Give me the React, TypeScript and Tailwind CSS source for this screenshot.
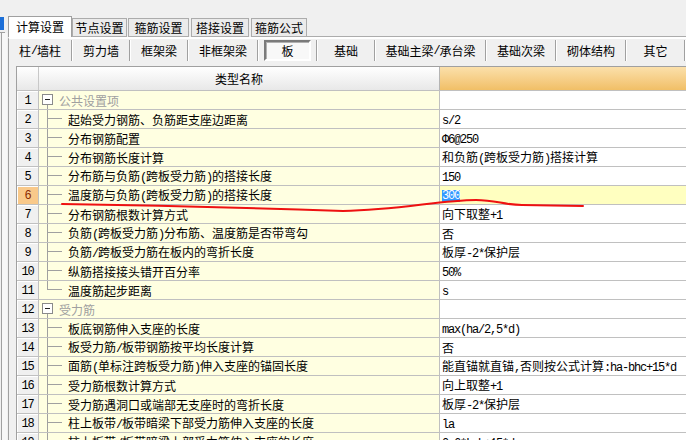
import React from 'react';

const latin = "font-['Liberation_Mono',monospace] text-[12px] tracking-[-1.2px]";

// latin runs get a half-width mono face, the rest stays CJK
const Txt = ({ s }: { s: string }) => (
  <>
    {s.split(/([\x20-\x7e\u03a6]+)/).filter(Boolean).map((p, i) =>
      /^[\x20-\x7e\u03a6]+$/.test(p)
        ? <span key={i} className={latin}>{p}</span>
        : <span key={i}>{p}</span>
    )}
  </>
);

type Row = { name: string; value: string; group?: boolean; last?: boolean };

const rows: Row[] = [
  { name: '公共设置项', value: '', group: true },
  { name: '起始受力钢筋、负筋距支座边距离', value: 's/2' },
  { name: '分布钢筋配置', value: '\u03a66@250' },
  { name: '分布钢筋长度计算', value: '和负筋(跨板受力筋)搭接计算' },
  { name: '分布筋与负筋(跨板受力筋)的搭接长度', value: '150' },
  { name: '温度筋与负筋(跨板受力筋)的搭接长度', value: '300' },
  { name: '分布钢筋根数计算方式', value: '向下取整+1' },
  { name: '负筋(跨板受力筋)分布筋、温度筋是否带弯勾', value: '否' },
  { name: '负筋/跨板受力筋在板内的弯折长度', value: '板厚-2*保护层' },
  { name: '纵筋搭接接头错开百分率', value: '50%' },
  { name: '温度筋起步距离', value: 's', last: true },
  { name: '受力筋', value: '', group: true },
  { name: '板底钢筋伸入支座的长度', value: 'max(ha/2,5*d)' },
  { name: '板受力筋/板带钢筋按平均长度计算', value: '否' },
  { name: '面筋(单标注跨板受力筋)伸入支座的锚固长度', value: '能直锚就直锚,否则按公式计算:ha-bhc+15*d' },
  { name: '受力筋根数计算方式', value: '向上取整+1' },
  { name: '受力筋遇洞口或端部无支座时的弯折长度', value: '板厚-2*保护层' },
  { name: '柱上板带/板带暗梁下部受力筋伸入支座的长度', value: 'la' },
  { name: '柱上板带/板带暗梁上部受力筋伸入支座的长度', value: '0.6*Lab+15*d' },
];

const tabs = [
  { label: '节点设置', w: 'w-[55px]', ml: '' },
  { label: '箍筋设置', w: 'w-[61px]', ml: 'ml-[1px]' },
  { label: '搭接设置', w: 'w-[58px]', ml: 'ml-[2px]' },
  { label: '箍筋公式', w: 'w-[56px]', ml: 'ml-[2px]' },
];

const subTabs = [
  { label: '柱/墙柱', w: 'w-[62px]' },
  { label: '剪力墙', w: 'w-[56px]' },
  { label: '框架梁', w: 'w-[56px]' },
  { label: '非框架梁', w: 'w-[68px]' },
  { label: '板', w: 'w-[57px]', active: true },
  { label: '基础', w: 'w-[56px]' },
  { label: '基础主梁/承台梁', w: 'w-[109px]' },
  { label: '基础次梁', w: 'w-[68px]' },
  { label: '砌体结构', w: 'w-[68px]' },
  { label: '其它', w: 'w-[57px]' },
];

const Tree = ({ group, last }: { group?: boolean; last?: boolean }) =>
  group ? (
    <svg width="20" height="18" className="shrink-0">
      <rect x="3.5" y="3.5" width="10" height="10" fill="#fff" stroke="#8a8a8a" />
      <line x1="6" y1="8.5" x2="11" y2="8.5" stroke="#222" />
      <line x1="8.5" y1="14" x2="8.5" y2="18" stroke="#a0a0a0" />
    </svg>
  ) : (
    <svg width="29" height="18" className="shrink-0">
      <line x1="8.5" y1="0" x2="8.5" y2={last ? 9 : 18} stroke="#a0a0a0" />
      <line x1="8" y1="8.5" x2="23" y2="8.5" stroke="#a0a0a0" />
    </svg>
  );

const App = () => {
  return (
    <div className="relative w-[686px] h-[440px] overflow-hidden bg-[#f0f0f0] flex font-['Noto_Sans_CJK_SC',sans-serif] text-[12px] text-black">
      {/* leftover of the side panel */}
      <div className="w-[8px] shrink-0 flex flex-col">
        <div className="h-[17px]" />
        <div className="h-[13px] w-[4px] bg-[#1c6fd8]" />
        <div className="h-[3px] w-[5px] border-b border-[#a0a0a0]" />
        <div className="flex-1 w-[6px] ml-[1px] border-l border-[#a0a0a0] bg-[#f7f7f7]" />
      </div>

      <div className="flex-1 min-w-0 flex flex-col">
        <div className="h-[16px] shrink-0" />
        {/* tab strip */}
        <div className="h-[21px] shrink-0 flex items-end">
          <div className="w-[64px] h-[21px] bg-white border border-b-0 border-[#a0a0a0] flex items-center justify-center">计算设置</div>
          {tabs.map((t) => (
            <div key={t.label} className={`${t.w} ${t.ml} h-[19px] bg-[#ebebeb] border border-[#acacac] flex items-center justify-center`}>
              {t.label}
            </div>
          ))}
          <div className="flex-1 h-[19px] border-b border-[#acacac]" />
        </div>

        <div className="flex-1 min-h-0 flex flex-col border-l border-[#a0a0a0] border-t-2 border-t-white pt-[1px]">
          {/* sub tabs */}
          <div className="h-[21px] shrink-0 flex">
            {subTabs.map((t) => (
              <React.Fragment key={t.label}>
                <div className={`${t.w} h-full flex items-center justify-center`}>
                  {t.active ? (
                    <div className="w-[47px] h-full border-2 border-t-[#7a7a7a] border-l-[#7a7a7a] border-b-white border-r-white bg-[#f8f8f8] shadow-[inset_1px_1px_0_#b0b0b0] flex items-center justify-center">
                      <Txt s={t.label} />
                    </div>
                  ) : (
                    <Txt s={t.label} />
                  )}
                </div>
                <div className="w-[2px] h-full border-l border-[#a0a0a0] border-r border-r-white" />
              </React.Fragment>
            ))}
          </div>

          {/* grid */}
          <div className="mt-[5px] ml-[7px] flex-1 min-h-0 flex flex-col border-l border-t border-[#a0a0a0] bg-white">
            <div className="h-[24px] shrink-0 flex border-b border-[#c0c0c0]">
              <div className="w-[22px] border-r border-[#c8c8c8] bg-linear-to-b from-white to-[#e8e8e8]" />
              <div className="w-[401px] border-r border-[#b4b4b4] bg-linear-to-b from-white to-[#e8e8e8] flex items-center justify-center pt-[1px]">类型名称</div>
              <div className="flex-1 bg-linear-to-b from-[#fbe0aa] to-[#f1bf66]" />
            </div>
            {rows.map((r, i) => {
              const cur = i === 5;
              return (
                <div key={i} className="h-[19px] shrink-0 flex leading-[18px] whitespace-nowrap">
                  <div className={`w-[22px] border-r border-b border-[#c0c0c0] shadow-[inset_1px_1px_0_#fff] flex items-center justify-center pt-[1px] ${cur ? 'bg-[#f9c98a] text-[#8a2a00]' : 'bg-[#f0f0f0]'}`}>
                    <span className={latin}>{i + 1}</span>
                  </div>
                  <div className="w-[401px] border-r border-b border-[#c0c0c0] bg-[#ffffe1] flex items-center overflow-hidden">
                    <Tree group={r.group} last={r.last} />
                    <span className={`pt-[2px] ${r.group ? 'text-[#a0a0a0]' : ''}`}>
                      <Txt s={r.name} />
                    </span>
                  </div>
                  <div className={`flex-1 border-b border-[#c0c0c0] pl-[2px] flex items-center overflow-hidden ${cur ? 'bg-[#ffffc0]' : ''}`}>
                    {cur ? (
                      <span className={`${latin} bg-[#3399ff] text-white leading-[12px] mt-[1px]`}>{r.value}</span>
                    ) : (
                      <span className="pt-[2px]"><Txt s={r.value} /></span>
                    )}
                  </div>
                </div>
              );
            })}
          </div>
        </div>
      </div>

      {/* red hand-drawn underline */}
      <svg className="absolute inset-0 pointer-events-none" width="686" height="440">
        <path
          d="M62,204 Q200,206 343,211 C400,210 440,200 476,200 C496,200 504,205 522,205 L583,206"
          fill="none"
          stroke="#ee1111"
          strokeWidth="2"
          strokeLinecap="round"
        />
      </svg>
    </div>
  );
};

export default App;
